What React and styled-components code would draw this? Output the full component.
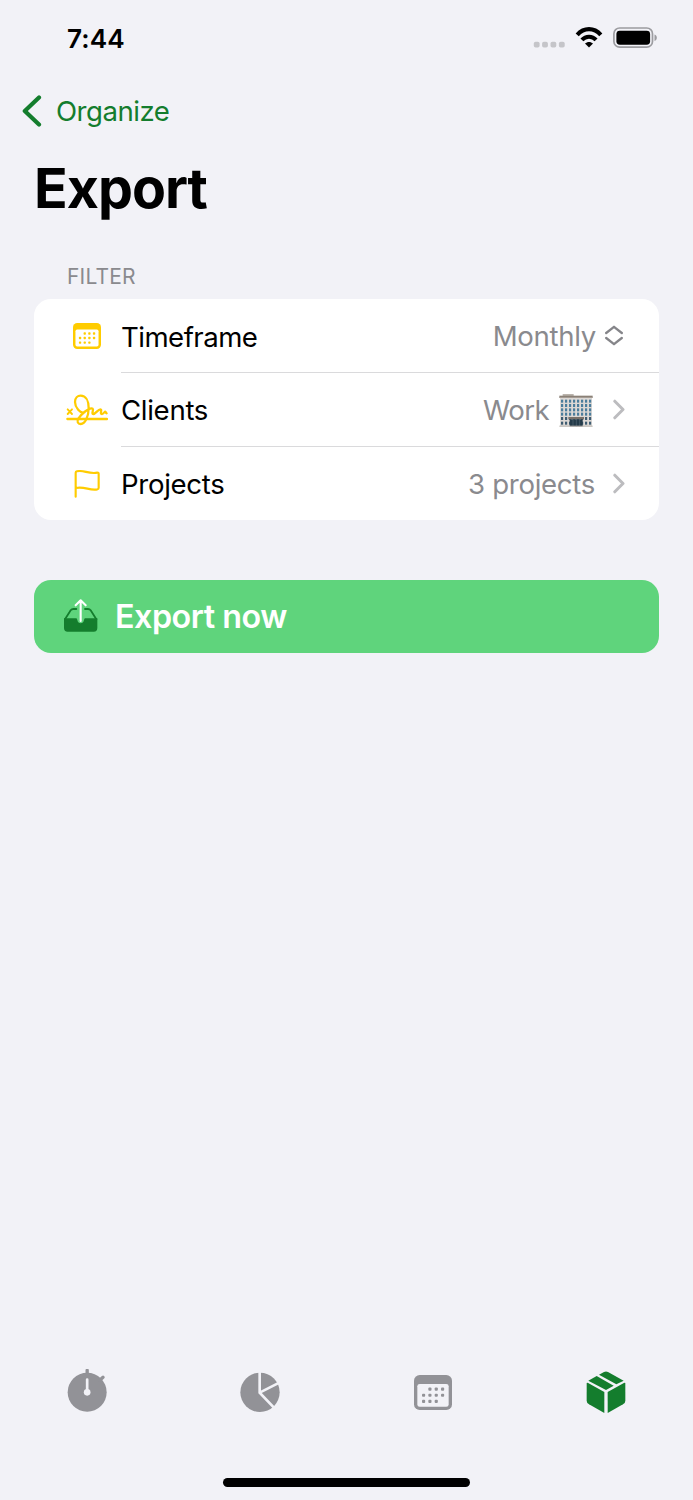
import styled, { createGlobalStyle } from 'styled-components';

const GlobalStyle = createGlobalStyle`
  * {
    box-sizing: border-box;
  }

  body {
    margin: 0;
    background: #f2f2f7;
  }
`;

const colors = {
  green: '#147d2d',
  yellow: '#ffcc00',
  gray: '#8a8a8e',
  tab: '#929297',
  chevron: '#bcbcbf',
};

const Screen = styled.div`
  display: flex;
  flex-direction: column;
  width: 693px;
  height: 1500px;
  overflow: hidden;
  background: #f2f2f7;
  color: #000;
  font-family: Inter, 'Liberation Sans', sans-serif;
  font-size: 27.6px;

  svg {
    display: block;
    flex: none;
  }
`;

const StatusBar = styled.header`
  display: flex;
  align-items: center;
  justify-content: space-between;
  height: 76px;
  padding: 0 36px 0 67px;
`;

const Time = styled.span`
  font-size: 26.2px;
  font-weight: 600;
  letter-spacing: 0.1px;
`;

const NavBar = styled.nav`
  display: flex;
  align-items: center;
  gap: 14px;
  height: 70px;
  padding-left: 22px;
  color: ${colors.green};
`;

const Title = styled.h1`
  height: 84px;
  margin: 0;
  padding-left: 34px;
  font-size: 55.5px;
  font-weight: 700;
  line-height: 84px;
  letter-spacing: -1px;
`;

const SectionHeader = styled.h2`
  height: 69px;
  margin: 0;
  padding: 33px 0 0 67px;
  color: ${colors.gray};
  font-size: 21px;
  font-weight: 400;
  line-height: 28px;
  letter-spacing: 0.2px;
`;

const Card = styled.section`
  margin: 0 34px;
  border-radius: 17px;
  background: #fff;
`;

const Row = styled.div`
  display: flex;
  height: ${(props) => (props.$last ? 73 : 74)}px;
  padding-left: 32px;
`;

const RowIcon = styled.div`
  display: flex;
  align-items: center;
  justify-content: center;
  width: 42px;
  margin-right: 13px;
`;

const RowBody = styled.div`
  display: flex;
  flex: 1;
  align-items: center;
  justify-content: space-between;
  padding-right: ${(props) => props.$inset || 34}px;
  border-bottom: ${(props) => (props.$last ? 'none' : '1px solid #dadadc')};
`;

const Label = styled.span`
  padding-top: ${(props) => props.$drop || 0}px;
  letter-spacing: ${(props) => props.$tracking ?? -0.3}px;
`;

const Value = styled.div`
  display: flex;
  align-items: center;
  gap: ${(props) => props.$gap}px;
  color: ${colors.gray};
`;

const Tagged = styled.span`
  display: flex;
  align-items: center;
  gap: 10px;
`;

const ExportButton = styled.button`
  display: flex;
  align-items: center;
  gap: 17px;
  height: 73.5px;
  margin: 59.5px 34px 0;
  padding: 0 0 0 30px;
  border: 0;
  border-radius: 17px;
  background: #5fd47c;
  color: #fff;
  font-family: inherit;
  font-size: 32.3px;
  font-weight: 600;
`;

const TabBar = styled.nav`
  display: grid;
  grid-template-columns: repeat(4, 1fr);
  justify-items: center;
  align-items: center;
  height: 72px;
  margin-top: auto;
`;

const HomeIndicator = styled.div`
  width: 247px;
  height: 9px;
  margin: 50px auto 13px;
  border-radius: 5px;
  background: #000;
`;

function StatusIcons() {
  return (
    <svg width="124" height="24" viewBox="533 26 124 24">
      <g fill="#c5c5c9">
        {[533.8, 542.1, 550.5, 558.9].map((x) => (
          <rect key={x} x={x} y="41.8" width="5.8" height="5.8" rx="1.8" />
        ))}
      </g>
      <g fill="none" stroke="#000">
        <path d="M577.2 34.8 C584 27.3 594 27.3 600.8 34.8" strokeWidth="4.2" />
        <path d="M581.9 39.8 C585.8 35.6 592.2 35.6 596.1 39.8" strokeWidth="4" />
      </g>
      <path d="M585 43.5 C587.2 41.4 590.8 41.4 593 43.5 L589 47.6Z" fill="#000" />
      <rect x="613.9" y="28" width="38.6" height="19.2" rx="5.8" fill="none" stroke="#9c9ca0" strokeWidth="1.7" />
      <rect x="616.4" y="30.7" width="33.7" height="14" rx="3.4" fill="#000" />
      <path d="M654.5 34.5 C657.6 35.6 657.6 39.8 654.5 41Z" fill="#9c9ca0" />
    </svg>
  );
}

function BackIcon() {
  return (
    <svg width="20" height="32" viewBox="0 0 20 32">
      <path d="M17 2.5 L2.8 16 L17 29.5" fill="none" stroke="currentColor" strokeWidth="4.2" strokeLinecap="round" strokeLinejoin="round" />
    </svg>
  );
}

const calendarDots = [
  [1, 0], [2, 0], [3, 0],
  [0, 1], [1, 1], [2, 1], [3, 1],
  [0, 2], [1, 2], [2, 2],
];

function CalendarIcon({ width, height, color, inner }) {
  return (
    <svg width={width} height={height} viewBox="0 0 114 106" preserveAspectRatio="none">
      <rect width="114" height="106" rx="17" fill={color} />
      <rect x="10" y="27" width="94" height="69" rx="7" fill={inner} />
      {calendarDots.map(([col, row]) => (
        <rect key={`${col}-${row}`} x={24 + col * 19} y={38 + row * 18.5} width="9.5" height="9.5" rx="3" fill={color} />
      ))}
    </svg>
  );
}

function SignatureIcon() {
  return (
    <svg width="42" height="32" viewBox="49 72 126 96">
      <g fill="none" stroke={colors.yellow} strokeWidth="6.8" strokeLinecap="round" strokeLinejoin="round">
        <path d="M53 147 H172" />
        <path d="M54 118 L67 132 M67 118 L54 132" strokeWidth="5.6" />
        <path d="M104 127 C92 132 76 112 76 96 C76 84 84 77 93 77 C108 77 117 92 117 114 C117 138 107 162 93 162 C84 162 81 154 86 146 C93 134 114 115 126 115 C136 115 123 132 131 132 C138 132 145 118 152 118 C159 118 149 132 157 132 C162 132 164 125 167 125 C169 125 168 130 171 130" />
      </g>
    </svg>
  );
}

function FlagIcon() {
  return (
    <svg width="26" height="28" viewBox="0 0 78 84">
      <path d="M5 80 V8 Q5 5 9 4 C29 -1 43 13 70 8 Q74 7 74 11 V53 Q74 57 70 58 C47 63 32 48 5 54" fill="none" stroke={colors.yellow} strokeWidth="6.4" strokeLinecap="round" strokeLinejoin="round" />
    </svg>
  );
}

function SortIcon() {
  return (
    <svg width="18" height="21" viewBox="0 0 18 21">
      <path d="M1.2 8 L9 1.8 L16.8 8 M1.2 13 L9 19.2 L16.8 13" fill="none" stroke="#858589" strokeWidth="2.3" strokeLinecap="round" strokeLinejoin="round" />
    </svg>
  );
}

function ChevronIcon() {
  return (
    <svg width="12" height="21" viewBox="0 0 12 21">
      <path d="M1.8 2.2 L10 10.5 L1.8 18.8" fill="none" stroke={colors.chevron} strokeWidth="3" strokeLinecap="round" strokeLinejoin="round" />
    </svg>
  );
}

function OfficeIcon() {
  const columns = [6, 18, 30, 42, 54, 66, 78, 90];
  return (
    <svg width="34" height="34" viewBox="0 -3 102 102" role="img" aria-label="office building">
      <rect x="11" y="0" width="33" height="7" fill="#bbb4ad" />
      <rect x="1" y="5" width="100" height="7" fill="#8b8076" />
      <rect x="3" y="11" width="96" height="86" fill="#dcd8d5" />
      {[17, 30, 43, 56, 69, 83].map((y) =>
        columns.map((x) => <rect key={`${x}-${y}`} x={x} y={y} width="6.5" height="9" fill={y > 60 ? '#3d5b70' : '#4b7d9c'} />)
      )}
      <rect x="28" y="69" width="47" height="7" fill="#787069" />
      <rect x="32" y="76" width="39" height="21" fill="#243b49" />
      <path d="M42 76 V97 M52 76 V97 M62 76 V97" stroke="#536773" strokeWidth="2" />
      <rect x="1" y="95" width="100" height="3" fill="#b6b0aa" />
    </svg>
  );
}

function ExportIcon() {
  return (
    <svg width="34" height="34" viewBox="102 89 102 102">
      <path d="M105 150 L122 123 Q125 119 130 119 H139 M165 119 H174 Q179 119 182 123 L199 150" fill="none" stroke={colors.green} strokeWidth="5.4" strokeLinecap="round" />
      <path d="M102 147 H139 Q141 147 142 152 C144 165 160 165 162 152 Q163 147 165 147 H202 V176 Q202 187 191 187 H113 Q102 187 102 176Z" fill={colors.green} />
      <path d="M152 155 V94 M137 108 L152 93 L167 108" fill="none" stroke="#fff" strokeWidth="6.2" strokeLinecap="round" strokeLinejoin="round" />
    </svg>
  );
}

function StopwatchIcon() {
  return (
    <svg width="42" height="46" viewBox="48 42 126 138">
      <circle cx="111.5" cy="112" r="58.5" fill={colors.tab} />
      <path d="M111.5 60 V46 M150 75 L159 67" fill="none" stroke={colors.tab} strokeWidth="10" strokeLinecap="round" />
      <path d="M111.5 74 V110" stroke="#f2f2f7" strokeWidth="8" strokeLinecap="round" />
      <circle cx="111.5" cy="112" r="10" fill="#f2f2f7" />
    </svg>
  );
}

function PieIcon() {
  return (
    <svg width="42" height="42" viewBox="57 48 126 126">
      <circle cx="120" cy="112" r="59" fill={colors.tab} />
      <path d="M119 48 V113 L164 160 M119 113 L178 83" fill="none" stroke="#f2f2f7" strokeWidth="8" />
    </svg>
  );
}

function BoxIcon() {
  return (
    <svg width="42" height="44" viewBox="46 45 126 132">
      <g fill={colors.green}>
        <path d="M54 83 L104 111 V174 L58 148 Q51 144 51 137 V84Z" />
        <path d="M164 83 L114 111 V174 L160 148 Q167 144 167 137 V84Z" />
        <path d="M56 77 L81 63 L132 92 L109 105Z" />
        <path d="M88 59 L103 51 Q109 48 115 51 L162 77 L140 88Z" />
      </g>
    </svg>
  );
}

function FilterRow({ icon, label, tracking, drop, gap, inset, last, children }) {
  return (
    <Row $last={last}>
      <RowIcon>{icon}</RowIcon>
      <RowBody $last={last} $inset={inset}>
        <Label $tracking={tracking} $drop={drop}>{label}</Label>
        <Value $gap={gap}>{children}</Value>
      </RowBody>
    </Row>
  );
}

function App() {
  return (
    <Screen>
      <GlobalStyle />
      <StatusBar>
        <Time>7:44</Time>
        <StatusIcons />
      </StatusBar>
      <NavBar>
        <BackIcon />
        <Label $tracking={-0.5}>Organize</Label>
      </NavBar>
      <Title>Export</Title>
      <SectionHeader>FILTER</SectionHeader>
      <Card>
        <FilterRow
          icon={<CalendarIcon width={28} height={26} color={colors.yellow} inner="#fff" />}
          label="Timeframe"
          tracking={-0.52}
          drop={2}
          gap={9}
          inset={36}
        >
          <Label>Monthly</Label>
          <SortIcon />
        </FilterRow>
        <FilterRow icon={<SignatureIcon />} label="Clients" gap={20}>
          <Tagged>
            <Label $tracking={-0.6}>Work</Label>
            <OfficeIcon />
          </Tagged>
          <ChevronIcon />
        </FilterRow>
        <FilterRow icon={<FlagIcon />} label="Projects" gap={18} last>
          <Label>3 projects</Label>
          <ChevronIcon />
        </FilterRow>
      </Card>
      <ExportButton>
        <ExportIcon />
        <Label $tracking={-0.5}>Export now</Label>
      </ExportButton>
      <TabBar>
        <StopwatchIcon />
        <PieIcon />
        <CalendarIcon width={38} height={35} color={colors.tab} inner="#f2f2f7" />
        <BoxIcon />
      </TabBar>
      <HomeIndicator />
    </Screen>
  );
}

export default App;
